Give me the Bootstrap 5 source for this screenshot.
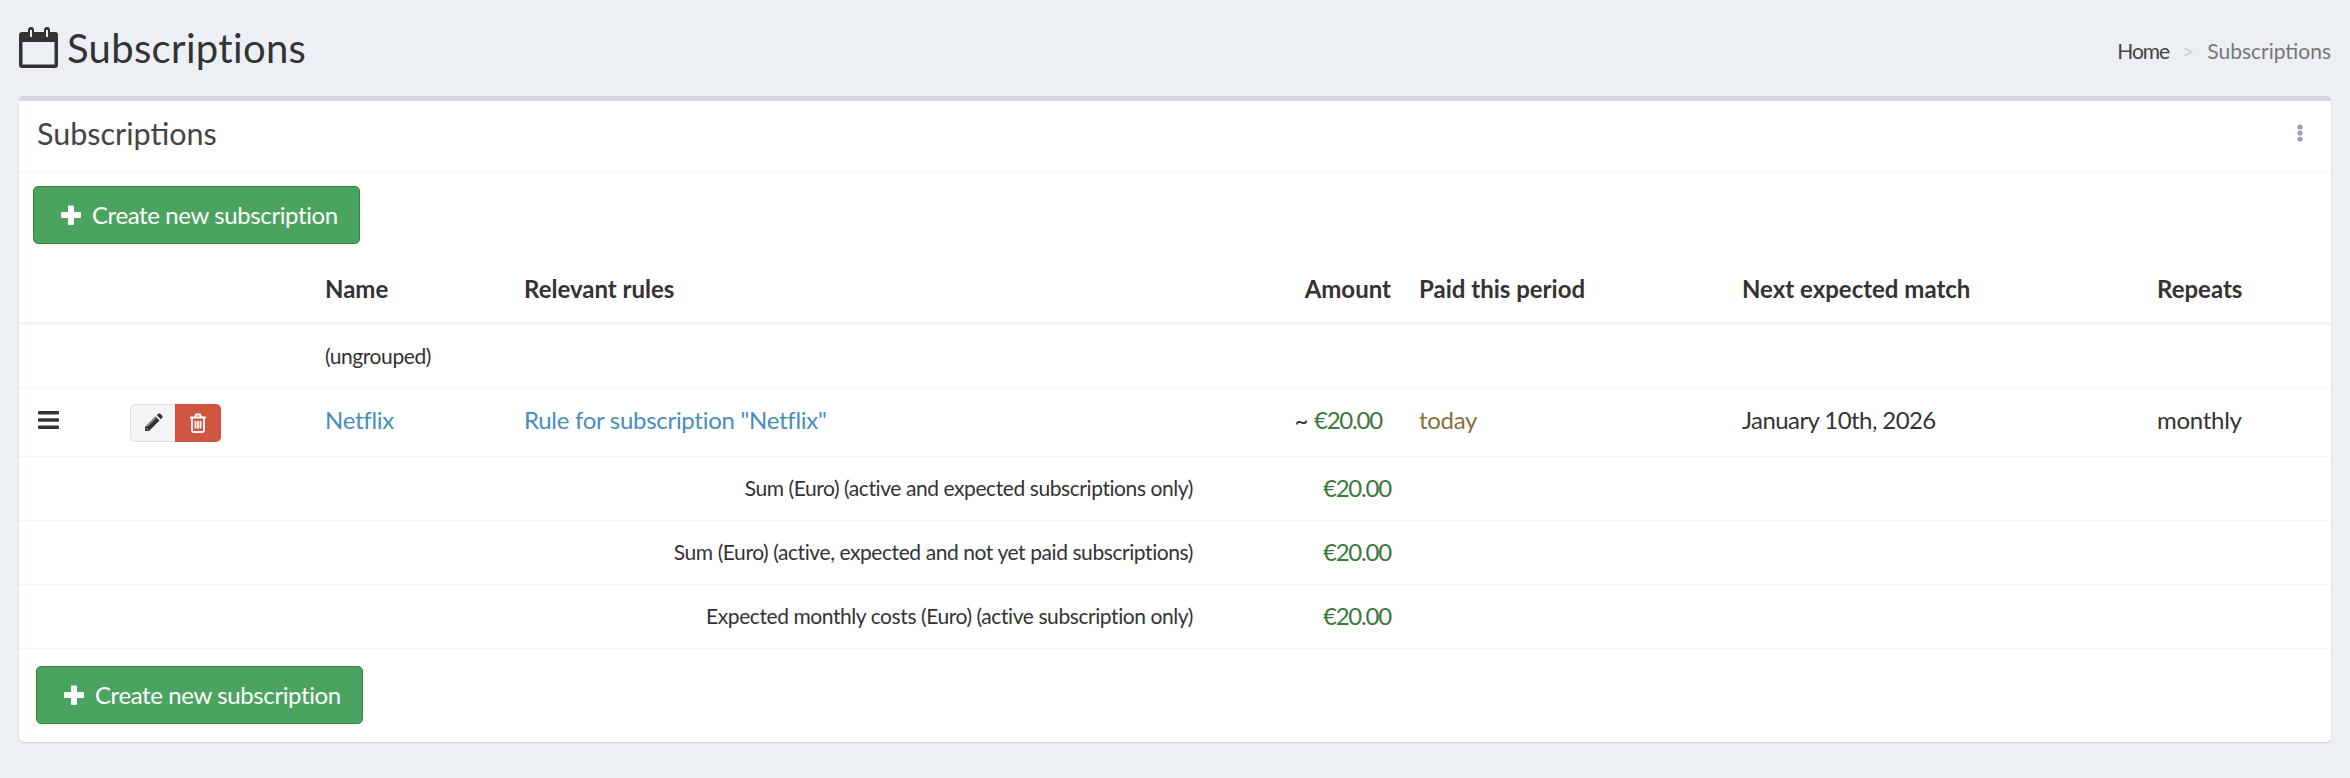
<!DOCTYPE html>
<html lang="en"><head><meta charset="utf-8"><title>Subscriptions</title>
<link href="https://cdn.jsdelivr.net/npm/bootstrap@5.3.0/dist/css/bootstrap.min.css" rel="stylesheet">
<style>
html,body{height:100%}
body{background:#ecf0f5;color:#333;font-family:Lato,"Noto Sans","Liberation Sans",sans-serif;font-size:24px}
.hdr{padding:22px 19px 0;height:96px}
.hdr h1{font-size:40px;font-weight:400;margin:0;line-height:52px;color:#333;letter-spacing:.008em}
.crumbs{font-size:21px;color:#777;margin-top:16px;line-height:26px}
.crumbs a{color:#444;text-decoration:none;letter-spacing:-.05em}
.crumbs .sep{color:#ccc;margin:0 13px}
.boxy{margin:0 19px;background:#fff;border-top:5px solid #d2d6de;border-radius:5px;box-shadow:0 1px 2px rgba(0,0,0,.15);height:646px}
.boxy-h{height:71px;border-bottom:1px solid #f4f4f4;padding:0 27px 6px 18px;color:#444}
.boxy-h h3{font-size:30.500px;font-weight:400;margin:0;line-height:1}
.btn-add{background:#4ba360;border:1px solid #398439;color:#fff;font-size:24px;letter-spacing:-.016em;height:58px;width:327px;border-radius:5px;padding:0 0 0 27px;display:flex;align-items:center;justify-content:flex-start;gap:11px}
.btn-add:hover{background:#4ba360;color:#fff}
.tbar{padding:14px 14px 0}
.bbar{padding:17px 17px}
.subs{width:100%;margin:0;table-layout:fixed;border-collapse:collapse}
.subs th,.subs td{padding:0 14px;vertical-align:middle;border-bottom:1px solid #f4f4f4;font-weight:400;color:#333}
.subs td{letter-spacing:-.012em}
.subs th{font-weight:700;height:79px;border-bottom-width:3px;padding-top:12px}
.subs a{color:#4a8dba;text-decoration:none}
.subs .sm{font-size:21px;letter-spacing:-.02em}
.subs .dt{letter-spacing:-.024em}
.r1 td{height:64px}.r2 td{height:69px;padding-bottom:3px}.r3 td{height:64px}
.cell-burger{padding-left:19px!important}
.cell-grp{padding-left:18px!important;padding-bottom:0!important}
.end-flush{padding-right:0!important}
.end-amt{padding-right:23px!important}
.subs .grn{color:#3c763d;letter-spacing:-.05em}
.subs .mut{color:#8a6d3b}
.grp{display:inline-flex;height:38px;width:91px;border-radius:5px;overflow:hidden;vertical-align:middle;margin-top:2px}
.grp span{display:flex;align-items:center;justify-content:center}
.grp .ed{width:45px;background:#f4f4f4;border:1px solid #ddd;border-right:0;border-radius:5px 0 0 5px}
.grp .dl{width:46px;background:#d05540}
.dots{color:#97a0b3}
</style></head><body>
<div class="hdr d-flex justify-content-between align-items-start">
<h1 class="d-flex align-items-center gap-2"><svg width="40" height="42" viewBox="0 0 40 42"><path fill="#333" d="M3 5h6V3a3 3 0 0 1 6 0v2h10V3a3 3 0 0 1 6 0v2h6a3 3 0 0 1 2 3v30a3 3 0 0 1-3 3H3a3 3 0 0 1-3-3V8a3 3 0 0 1 3-3zM3.500 15v22.500h32V15z"/><path fill="#ecf0f5" d="M11 3h2v7h-2zM27 3h2v7h-2z"/></svg>Subscriptions</h1>
<div class="crumbs"><a href="#">Home</a><span class="sep">&gt;</span>Subscriptions</div>
</div>
<div class="boxy">
<div class="boxy-h d-flex justify-content-between align-items-center"><h3>Subscriptions</h3><svg class="dots" width="8" height="18" viewBox="0 0 8 18" fill="currentColor"><circle cx="4" cy="3" r="2.600"/><circle cx="4" cy="9" r="2.600"/><circle cx="4" cy="15" r="2.600"/></svg></div>
<div class="tbar"><a href="#" class="btn btn-add"><svg width="20" height="20" viewBox="0 0 20 20"><path fill="#fff" d="M7 1.500a1 1 0 0 1 1-1h4a1 1 0 0 1 1 1V7h6a1 1 0 0 1 1 1v4a1 1 0 0 1-1 1h-6v6a1 1 0 0 1-1 1H8a1 1 0 0 1-1-1v-6H1a1 1 0 0 1-1-1V8a1 1 0 0 1 1-1h6z"/></svg>Create new subscription</a></div>
<table class="subs">
<colgroup><col style="width:93px"><col style="width:199px"><col style="width:199px"><col style="width:683px"><col style="width:212px"><col style="width:323px"><col style="width:415px"><col></colgroup>
<thead><tr><th></th><th></th><th>Name</th><th>Relevant rules</th><th class="text-end">Amount</th><th>Paid this period</th><th>Next expected match</th><th>Repeats</th></tr></thead>
<tbody>
<tr class="r1"><td colspan="2"></td><td class="sm" colspan="6">(ungrouped)</td></tr>
<tr class="r2"><td class="cell-burger"><svg class="d-block" width="21" height="18" viewBox="0 0 21 18"><path fill="#333" d="M1 0h19a1 1 0 0 1 1 1v1.500a1 1 0 0 1-1 1H1a1 1 0 0 1-1-1V1a1 1 0 0 1 1-1zM1 7.250h19a1 1 0 0 1 1 1v1.500a1 1 0 0 1-1 1H1a1 1 0 0 1-1-1v-1.500a1 1 0 0 1 1-1zM1 14.500h19a1 1 0 0 1 1 1V17a1 1 0 0 1-1 1H1a1 1 0 0 1-1-1v-1.500a1 1 0 0 1 1-1z"/></svg></td>
<td class="cell-grp"><div class="grp"><span class="ed"><svg width="19" height="19" viewBox="0 0 19 19"><path fill="#333" d="M1 14 11.500 3.500l4 4L5 18H1zM12.800 2.200l1.400-1.400a1.500 1.500 0 0 1 2 0l2 2a1.500 1.500 0 0 1 0 2l-1.400 1.400z"/><path fill="none" stroke="#f4f4f4" stroke-width=".8" d="M3 13.500 12 4.500M2.500 15.500l1.500 1.500"/></svg></span><span class="dl"><svg width="18" height="20" viewBox="0 0 18 20" fill="none" stroke="#fff" stroke-width="1.800"><path d="M1 4.500h16M6 4.500 7 1.500h4l1 3M3 4.500v13a1.500 1.500 0 0 0 1.500 1.500h9a1.500 1.500 0 0 0 1.500-1.500v-13M6.500 8v7.500M9 8v7.500M11.500 8v7.500"/></svg></span></div></td>
<td><a href="#">Netflix</a></td><td><a href="#">Rule for subscription "Netflix"</a></td>
<td class="text-end end-amt">~ <span class="grn">€20.00</span></td><td class="mut">today</td><td class="dt">January 10th, 2026</td><td>monthly</td></tr>
<tr class="r3"><td colspan="4" class="text-end sm end-flush">Sum (Euro) (active and expected subscriptions only)</td><td class="text-end grn">€20.00</td><td colspan="3"></td></tr>
<tr class="r3"><td colspan="4" class="text-end sm end-flush">Sum (Euro) (active, expected and not yet paid subscriptions)</td><td class="text-end grn">€20.00</td><td colspan="3"></td></tr>
<tr class="r3"><td colspan="4" class="text-end sm end-flush">Expected monthly costs (Euro) (active subscription only)</td><td class="text-end grn">€20.00</td><td colspan="3"></td></tr>
</tbody></table>
<div class="bbar"><a href="#" class="btn btn-add"><svg width="20" height="20" viewBox="0 0 20 20"><path fill="#fff" d="M7 1.500a1 1 0 0 1 1-1h4a1 1 0 0 1 1 1V7h6a1 1 0 0 1 1 1v4a1 1 0 0 1-1 1h-6v6a1 1 0 0 1-1 1H8a1 1 0 0 1-1-1v-6H1a1 1 0 0 1-1-1V8a1 1 0 0 1 1-1h6z"/></svg>Create new subscription</a></div>
</div>
<script src="https://cdn.jsdelivr.net/npm/bootstrap@5.3.0/dist/js/bootstrap.bundle.min.js"></script>
</body></html>
